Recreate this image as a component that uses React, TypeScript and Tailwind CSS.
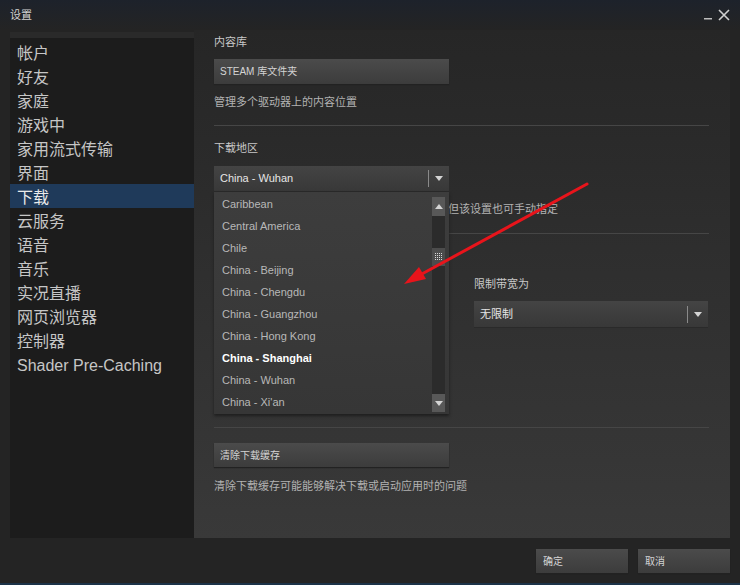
import React from "react";

const navItems = [
  "帐户",
  "好友",
  "家庭",
  "游戏中",
  "家用流式传输",
  "界面",
  "下载",
  "云服务",
  "语音",
  "音乐",
  "实况直播",
  "网页浏览器",
  "控制器",
  "Shader Pre-Caching",
];

const regions = [
  "Caribbean",
  "Central America",
  "Chile",
  "China - Beijing",
  "China - Chengdu",
  "China - Guangzhou",
  "China - Hong Kong",
  "China - Shanghai",
  "China - Wuhan",
  "China - Xi'an",
];

function DownTri({ className = "" }: { className?: string }) {
  return (
    <svg width="8" height="5" viewBox="0 0 8 5" className={className}>
      <path d="M0 0 L8 0 L4 5 Z" fill="#d4d4d4" />
    </svg>
  );
}

function UpTri({ className = "" }: { className?: string }) {
  return (
    <svg width="8" height="5" viewBox="0 0 8 5" className={className}>
      <path d="M0 5 L8 5 L4 0 Z" fill="#d4d4d4" />
    </svg>
  );
}

function Select({ value }: { value: string }) {
  return (
    <div className="flex h-full w-full items-center bg-linear-to-b from-[#444444] to-[#383838] shadow-[0_1px_0_#2a2a2a]">
      <span className="flex-1 pl-[6px] text-[11px] text-[#e6e6e6]">{value}</span>
      <div className="h-[17px] w-px bg-[#8a8a8a]" />
      <div className="flex w-[20px] items-center justify-center">
        <DownTri />
      </div>
    </div>
  );
}

function Btn({ label, className = "" }: { label: string; className?: string }) {
  return (
    <div
      className={`flex items-center bg-linear-to-b from-[#4b4b4b] to-[#3c3c3c] pl-[6px] text-[10px] text-[#d4d4d4] shadow-[0_1px_1px_#222] ${className}`}
    >
      {label}
    </div>
  );
}

function Grip() {
  const dots = [];
  for (let r = 0; r < 4; r++) {
    for (let c = 0; c < 4; c++) {
      dots.push(<rect key={`${r}-${c}`} x={c * 2} y={r * 2} width="1" height="1" fill="#d8d8d8" />);
    }
  }
  return (
    <svg width="8" height="8" viewBox="0 0 8 8">
      {dots}
    </svg>
  );
}

export default function App() {
  return (
    <div className="relative h-[585px] w-[740px] overflow-hidden border-b-2 border-[#1c3348] bg-[#242424] [font-family:'Liberation_Sans','Noto_Sans_CJK_SC',sans-serif]">
      {/* title bar */}
      <div className="flex h-[30px] items-center justify-between bg-linear-to-b from-[#1d222b] to-[#242424] pl-[10px] pr-[10px]">
        <span className="text-[11px] text-[#d2d2d2]">设置</span>
        <div className="flex items-center gap-[5px]">
          <svg width="9" height="12" viewBox="0 0 9 12">
            <rect x="0" y="9" width="8" height="1.5" fill="#bdbdbd" />
          </svg>
          <svg width="12" height="12" viewBox="0 0 12 12">
            <path d="M1 1 L11 11 M11 1 L1 11" stroke="#d0d0d0" strokeWidth="1.6" />
          </svg>
        </div>
      </div>

      {/* body */}
      <div className="flex h-[508px] px-[10px]">
        {/* sidebar */}
        <div className="mt-[2px] w-[184px] border-t-[6px] border-[#2a2a2a] bg-[#1c1c1c] pt-[2px]">
          {navItems.map((it) => (
            <div
              key={it}
              className={`flex h-[24px] items-center pl-[7px] pt-[3px] text-[16px] ${
                it === "下载" ? "bg-[#1f3a5a] text-[#eaeaea]" : "text-[#c6c6c6]"
              }`}
            >
              {it}
            </div>
          ))}
        </div>

        {/* main panel */}
        <div className="flex flex-1 flex-col bg-linear-to-b from-[#262626] to-[#393939] pl-[20px] pr-[21px] pt-[4px]">
          <div className="flex h-[16px] items-center text-[11px] text-[#c8c8c8]">内容库</div>
          <Btn label="STEAM 库文件夹" className="mt-[9px] h-[25px] w-[235px]" />
          <div className="mt-[10px] flex h-[16px] items-center text-[11px] text-[#b2b2b2]">
            管理多个驱动器上的内容位置
          </div>
          <div className="mt-[15px] h-px bg-[#464646]" />
          <div className="mt-[14px] flex h-[16px] items-center text-[11px] text-[#c8c8c8]">下载地区</div>

          <div className="relative z-10 mt-[10px] h-[25px] w-[235px]">
            <Select value="China - Wuhan" />
            {/* dropdown list */}
            <div className="absolute left-0 top-[26px] h-[222px] w-[235px] bg-linear-to-b from-[#3d3d3d] to-[#363636] pt-[1px] shadow-[0_2px_3px_#1e1e1e]">
              {regions.map((r) => (
                <div
                  key={r}
                  className={`flex h-[22px] items-center pl-[8px] text-[11px] ${
                    r === "China - Shanghai" ? "font-bold text-[#ffffff]" : "text-[#b8b8b8]"
                  }`}
                >
                  {r}
                </div>
              ))}
              <div className="absolute bottom-[2px] left-[218px] top-[5px] flex w-[13px] flex-col">
                <div className="flex h-[19px] items-center justify-center bg-[#585858]">
                  <UpTri />
                </div>
                <div className="flex flex-1 flex-col bg-[#2b2b2b] pt-[32px]">
                  <div className="flex h-[18px] items-center justify-center bg-[#4c4c4c]">
                    <Grip />
                  </div>
                </div>
                <div className="flex h-[18px] items-center justify-center bg-[#585858]">
                  <DownTri />
                </div>
              </div>
            </div>
          </div>

          <div className="mt-[10px] flex h-[16px] items-center pl-[234px] text-[11px] text-[#b2b2b2]">
            但该设置也可手动指定
          </div>
          <div className="mt-[16px] h-px bg-[#464646]" />

          <div className="mt-[42px] grid grid-cols-[235px_234px] gap-x-[25px]">
            <div />
            <div className="flex flex-col">
              <div className="flex h-[16px] items-center text-[11px] text-[#c8c8c8]">限制带宽为</div>
              <div className="mt-[9px] h-[26px]">
                <Select value="无限制" />
              </div>
            </div>
          </div>

          <div className="mt-[100px] h-px bg-[#464646]" />
          <Btn label="清除下载缓存" className="mt-[15px] h-[24px] w-[235px]" />
          <div className="mt-[11px] flex h-[16px] items-center text-[11px] text-[#b2b2b2]">
            清除下载缓存可能能够解决下载或启动应用时的问题
          </div>
        </div>
      </div>

      {/* footer buttons */}
      <div className="mt-[11px] flex justify-end gap-[10px] pr-[10px]">
        <Btn label="确定" className="h-[24px] w-[92px] pl-[7px]" />
        <Btn label="取消" className="h-[24px] w-[92px] pl-[7px]" />
      </div>

      {/* red annotation arrow */}
      <svg className="pointer-events-none absolute left-0 top-0 z-20" width="740" height="585" viewBox="0 0 740 585">
        <line x1="587" y1="184" x2="420" y2="275" stroke="#e8141b" strokeWidth="3" strokeLinecap="round" />
        <path d="M404 284 L426 279 L419 267 Z" fill="#e8141b" />
      </svg>
    </div>
  );
}
